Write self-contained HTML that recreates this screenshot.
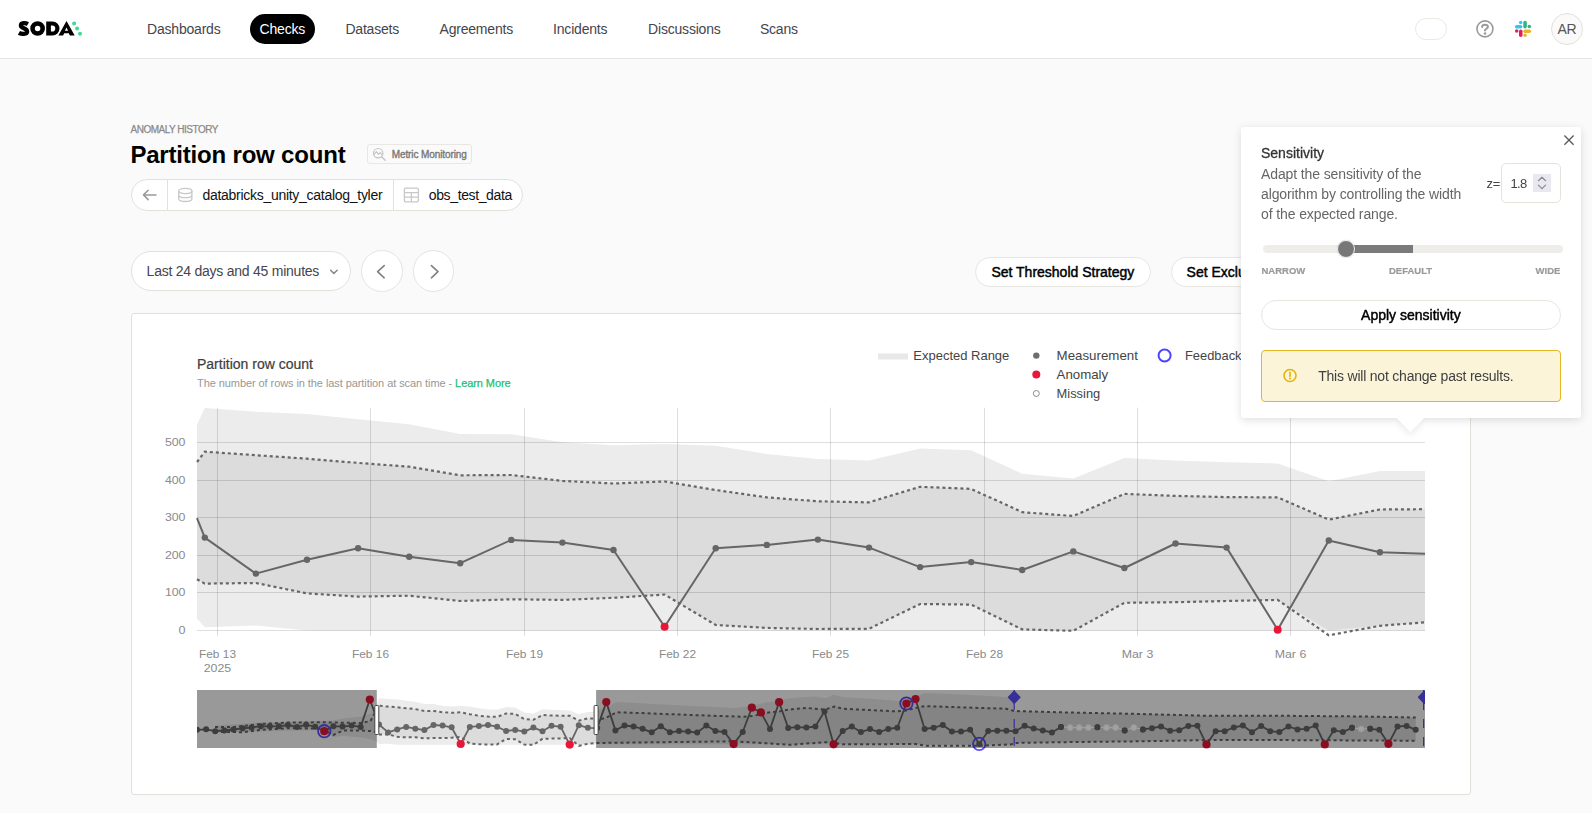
<!DOCTYPE html>
<html lang="en">
<head>
<meta charset="utf-8">
<title>Partition row count - Anomaly history</title>
<style>
*{box-sizing:border-box;margin:0;padding:0}
html,body{width:1592px;height:813px;overflow:hidden}
body{position:relative;background:#fafafa;font-family:"Liberation Sans",sans-serif;font-size:14px;color:#444}
.abs,.t{position:absolute;white-space:nowrap}
.t{line-height:1}
.fb{-webkit-text-stroke:0.45px currentColor}
header{position:absolute;left:0;top:0;width:1592px;height:59px;background:#fff;border-bottom:1px solid #e6e5e1}
.nav{position:absolute;top:22.4px;font-size:14px;line-height:14px;color:#45454d;letter-spacing:-0.2px;white-space:nowrap}
.navpill{position:absolute;left:250px;top:14px;width:65px;height:30px;border-radius:15px;background:#000}
.pill{position:absolute;background:#fff;border:1px solid #e3e1dc;border-radius:20px}
.circ{position:absolute;width:41.6px;height:41.6px;border-radius:50%;background:#fff;border:1px solid #e6e4df}
.card{position:absolute;left:131px;top:313px;width:1340px;height:482px;background:#fff;border:1px solid #e2e0db;border-radius:3px}
svg.chart{position:absolute;left:0;top:0}
.pop{position:absolute;left:1241px;top:127px;width:340px;height:291px;background:#fff;border-radius:3px;box-shadow:0 2px 9px rgba(0,0,0,.13)}
.poplayer{position:absolute;left:0;top:0;width:1592px;height:813px;will-change:transform;pointer-events:none}
.arrow{position:absolute;left:1390.9px;top:418px;width:40px;height:24px;overflow:hidden}
.arrow i{position:absolute;left:10.4px;top:-9.4px;width:18.8px;height:18.8px;background:#fff;transform:rotate(45deg);box-shadow:3px 3px 7px rgba(0,0,0,.07)}
</style>
</head>
<body>

<header>
  <!-- logo -->
  <svg class="abs" style="left:0;top:0" width="100" height="58" viewBox="0 0 100 58">
    <path d="M27.9 24.1C25.6 22.8 20.9 22.5 20.9 25.6C20.9 28.7 27.1 28 27.1 31.5C27.1 34.6 21.4 34.2 18.9 32.8" fill="none" stroke="#000" stroke-width="4.3"/>
    <circle cx="37.6" cy="28.5" r="5.05" fill="none" stroke="#000" stroke-width="4.6"/>
    <path fill-rule="evenodd" d="M46.2 21.4H52.4A7.1 7.1 0 0 1 52.4 35.6H46.2ZM50.9 25.4V31.6H52.2A3.1 3.1 0 0 0 52.2 25.4Z" fill="#000"/>
    <path fill-rule="evenodd" d="M58.4 35.6L66.5 20.9L74.7 35.6H69.9L68.8 33.3H64.2L63.1 35.6ZM66.5 27.6L64.9 30.8H68.1Z" fill="#000"/>
    <circle cx="74.1" cy="23.5" r="2" fill="#3ddc91"/>
    <circle cx="77.1" cy="28.6" r="2" fill="#3ddc91"/>
    <circle cx="80" cy="33.7" r="2" fill="#3ddc91"/>
  </svg>
  <div class="nav" style="left:147px">Dashboards</div>
  <div class="navpill"></div>
  <div class="nav" style="left:259.6px;color:#fff">Checks</div>
  <div class="nav" style="left:345.4px">Datasets</div>
  <div class="nav" style="left:439.5px">Agreements</div>
  <div class="nav" style="left:553.1px">Incidents</div>
  <div class="nav" style="left:648.1px">Discussions</div>
  <div class="nav" style="left:759.9px">Scans</div>

  <div class="abs" style="left:1415px;top:18px;width:32px;height:22px;border:1px solid #ebe9e4;border-radius:11px;background:#fff"></div>
  <!-- help -->
  <svg class="abs" style="left:1474px;top:18px" width="22" height="22" viewBox="0 0 22 22">
    <circle cx="10.95" cy="10.85" r="8" fill="none" stroke="#999" stroke-width="1.6"/>
    <path d="M8.1 8.9C8.2 7.4 9.5 6.8 11 6.8C12.7 6.8 13.9 7.7 13.9 9C13.9 10.7 11 10.8 11 12.6" fill="none" stroke="#999" stroke-width="2" stroke-linecap="round"/>
    <circle cx="11" cy="15.4" r="1.25" fill="#999"/>
  </svg>
  <!-- slack -->
  <svg class="abs" style="left:1513px;top:19px" width="20" height="20" viewBox="1513 19 20 20">
    <rect x="1514.9" y="24.9" width="7.5" height="3.5" rx="1.75" fill="#36c5f0"/><circle cx="1520.7" cy="22.5" r="1.75" fill="#36c5f0"/>
    <rect x="1523.3" y="20.8" width="3.5" height="7.6" rx="1.75" fill="#2eb67d"/><circle cx="1529.3" cy="26.6" r="1.75" fill="#2eb67d"/>
    <rect x="1523.3" y="29.4" width="7.8" height="3.5" rx="1.75" fill="#ecb22e"/><circle cx="1525.1" cy="35.3" r="1.75" fill="#ecb22e"/>
    <rect x="1519" y="29.4" width="3.5" height="7.7" rx="1.75" fill="#e01e5a"/><circle cx="1516.7" cy="31.1" r="1.75" fill="#e01e5a"/>
  </svg>
  <div class="abs" style="left:1551px;top:13px;width:32px;height:32px;border-radius:50%;background:#fafafa;border:1px solid #e3e1dc"></div>
  <div class="t" style="left:1557.6px;top:22px;font-size:14px;line-height:14px;color:#555;letter-spacing:-0.4px">AR</div>
</header>

<!-- title block -->
<div class="t" style="left:130.6px;top:124.9px;font-size:10px;line-height:10px;color:#8a8a8a;letter-spacing:-0.5px;-webkit-text-stroke:0.25px #8a8a8a">ANOMALY HISTORY</div>
<h1 class="t" style="left:130.4px;top:142.5px;font-size:24px;line-height:24px;font-weight:700;color:#000;letter-spacing:-0.19px">Partition row count</h1>

<div class="abs" style="left:366.9px;top:143.7px;width:104.8px;height:20.4px;border:1px solid #e8e7e3;border-radius:3px;background:#fafafa"></div>
<svg class="abs" style="left:370px;top:145px" width="18" height="18" viewBox="0 0 18 18">
  <circle cx="8.2" cy="8.2" r="4.7" fill="none" stroke="#c4c4c4" stroke-width="1.2"/>
  <path d="M11.7 11.8L15.2 15.3" stroke="#c4c4c4" stroke-width="1.3" stroke-linecap="round" fill="none"/>
  <path d="M3.9 9.6L6.4 6.6L8.6 9.4L10.3 7.6L12.4 9.8" stroke="#c4c4c4" stroke-width="1.1" fill="none" stroke-linejoin="round"/>
</svg>
<div class="t fb" style="left:391.7px;top:150px;font-size:10px;line-height:10px;color:#777;letter-spacing:-0.1px;-webkit-text-stroke-width:0.35px">Metric Monitoring</div>

<!-- breadcrumb -->
<div class="pill" style="left:131px;top:179px;width:391.5px;height:32px;border-radius:16px"></div>
<div class="abs" style="left:167px;top:180px;width:1px;height:30px;background:#e3e1dc"></div>
<div class="abs" style="left:393px;top:180px;width:1px;height:30px;background:#e3e1dc"></div>
<svg class="abs" style="left:140px;top:186px" width="20" height="18" viewBox="0 0 20 18">
  <path d="M16 8.9H3.6M8.2 4.2L3.5 8.9L8.2 13.6" fill="none" stroke="#9a9a9a" stroke-width="1.5" stroke-linecap="round" stroke-linejoin="round"/>
</svg>
<svg class="abs" style="left:176px;top:186px" width="18" height="18" viewBox="0 0 18 18">
  <ellipse cx="9.3" cy="5" rx="6.6" ry="2.6" fill="none" stroke="#c8c8c8" stroke-width="1.3"/>
  <path d="M2.7 5V12.8C2.7 14.3 5.6 15.5 9.3 15.5C13 15.5 15.9 14.3 15.9 12.8V5M2.7 8.9C2.7 10.4 5.6 11.6 9.3 11.6C13 11.6 15.9 10.4 15.9 8.9" fill="none" stroke="#c8c8c8" stroke-width="1.3"/>
</svg>
<div class="t" style="left:202.4px;top:188.4px;font-size:14px;line-height:14px;color:#111;letter-spacing:-0.28px">databricks_unity_catalog_tyler</div>
<svg class="abs" style="left:402px;top:186px" width="18" height="18" viewBox="0 0 18 18">
  <rect x="2.4" y="2.2" width="14" height="13.6" rx="1.3" fill="none" stroke="#c8c8c8" stroke-width="1.3"/>
  <path d="M2.4 6.6H16.4M2.4 11.2H16.4M9.4 6.6V15.8" fill="none" stroke="#c8c8c8" stroke-width="1.3"/>
</svg>
<div class="t" style="left:428.8px;top:188.4px;font-size:14px;line-height:14px;color:#111;letter-spacing:-0.38px">obs_test_data</div>

<!-- time range -->
<div class="pill" style="left:131px;top:251px;width:220px;height:40px;border-radius:20px"></div>
<div class="t" style="left:146.6px;top:264.4px;font-size:14px;line-height:14px;color:#45454d;letter-spacing:-0.24px">Last 24 days and 45 minutes</div>
<svg class="abs" style="left:328px;top:266px" width="12" height="12" viewBox="0 0 12 12"><path d="M2.6 4.3L5.9 7.4L9.2 4.3" fill="none" stroke="#888" stroke-width="1.5" stroke-linecap="round" stroke-linejoin="round"/></svg>
<div class="circ" style="left:361.2px;top:250.3px"></div>
<div class="circ" style="left:412.9px;top:250.3px"></div>
<svg class="abs" style="left:372px;top:262px" width="20" height="20" viewBox="0 0 20 20"><path d="M12.2 3.6L5.6 9.7L12.2 15.8" fill="none" stroke="#808080" stroke-width="1.6" stroke-linecap="round" stroke-linejoin="round"/></svg>
<svg class="abs" style="left:424px;top:262px" width="20" height="20" viewBox="0 0 20 20"><path d="M7.4 3.6L14 9.7L7.4 15.8" fill="none" stroke="#808080" stroke-width="1.6" stroke-linecap="round" stroke-linejoin="round"/></svg>

<!-- action buttons -->
<div class="pill" style="left:975px;top:257px;width:176px;height:30px;border-radius:15px;border-color:#e8e6e1"></div>
<div class="t fb" style="left:991.4px;top:264.7px;font-size:14px;line-height:14px;color:#000">Set Threshold Strategy</div>
<div class="pill" style="left:1171px;top:257px;width:190px;height:30px;border-radius:15px;border-color:#e8e6e1"></div>
<div class="t fb" style="left:1186.6px;top:264.7px;font-size:14px;line-height:14px;color:#000">Set Exclusion Values</div>

<!-- chart card -->
<div class="card"></div>
<div class="t" style="left:197px;top:356.9px;font-size:14px;line-height:14px;color:#3d3d3d;-webkit-text-stroke:0.2px #3d3d3d">Partition row count</div>
<div class="t" style="left:197px;top:377.6px;font-size:11px;line-height:11px;color:#979797;letter-spacing:-0.075px">The number of rows in the last partition at scan time - <span style="color:#1dbf73;-webkit-text-stroke:0.25px #1dbf73">Learn More</span></div>

<svg class="chart" width="1592" height="813" viewBox="0 0 1592 813">
<polygon fill="#ececec" points="197.0,424.6 204.8,408.0 255.9,411.8 307.0,413.9 358.1,419.2 409.2,424.2 460.2,434.0 511.3,434.2 562.4,442.2 613.5,445.2 664.6,444.0 715.7,445.8 766.8,454.0 817.9,459.0 869.0,460.5 920.1,448.4 971.2,450.2 1022.2,473.8 1073.3,478.5 1124.4,457.9 1175.5,460.5 1226.6,462.3 1277.7,463.5 1328.8,481.2 1379.9,471.1 1425.0,471.1 1425.0,630.5 1379.9,630.5 1328.8,630.5 1277.7,630.5 1226.6,630.5 1175.5,630.5 1124.4,630.5 1073.3,630.5 1022.2,630.5 971.2,630.5 920.1,630.5 869.0,630.5 817.9,630.5 766.8,630.5 715.7,630.5 664.6,630.5 613.5,630.5 562.4,630.5 511.3,630.5 460.2,630.5 409.2,630.5 358.1,630.5 307.0,630.5 255.9,625.5 204.8,627.3 197.0,618.5"/>
<polygon fill="#dcdcdc" points="197.0,462.0 204.8,451.7 255.9,455.2 307.0,458.7 358.1,462.9 409.2,466.7 460.2,475.3 511.3,475.0 562.4,480.9 613.5,483.5 664.6,481.5 715.7,490.0 766.8,497.4 817.9,501.3 869.0,502.4 920.1,486.8 971.2,488.9 1022.2,512.2 1073.3,516.0 1124.4,493.9 1175.5,495.9 1226.6,497.1 1277.7,497.4 1328.8,519.6 1379.9,509.5 1425.0,509.2 1425.0,622.3 1379.9,625.8 1328.8,630.5 1277.7,599.9 1226.6,601.0 1175.5,602.2 1124.4,602.8 1073.3,630.5 1022.2,629.4 971.2,604.6 920.1,604.0 869.0,628.8 817.9,629.0 766.8,627.9 715.7,625.0 664.6,594.5 613.5,597.8 562.4,599.9 511.3,599.3 460.2,601.0 409.2,595.7 358.1,596.6 307.0,593.4 255.9,583.0 204.8,583.6 197.0,579.2"/>
<path d="M197 442.5H1425M197 480.5H1425M197 517.5H1425M197 555.5H1425M197 592.5H1425M197 630.5H1425M217.5 407.7V636M370.5 407.7V636M524.5 407.7V636M677.5 407.7V636M830.5 407.7V636M984.5 407.7V636M1137.5 407.7V636M1290.5 407.7V636" stroke="#000" stroke-opacity="0.13" stroke-width="1" fill="none"/>
<polyline points="197.0,462.0 204.8,451.7 255.9,455.2 307.0,458.7 358.1,462.9 409.2,466.7 460.2,475.3 511.3,475.0 562.4,480.9 613.5,483.5 664.6,481.5 715.7,490.0 766.8,497.4 817.9,501.3 869.0,502.4 920.1,486.8 971.2,488.9 1022.2,512.2 1073.3,516.0 1124.4,493.9 1175.5,495.9 1226.6,497.1 1277.7,497.4 1328.8,519.6 1379.9,509.5 1425.0,509.2" fill="none" stroke="#666" stroke-width="2.2" stroke-dasharray="3 3"/>
<polyline points="197.0,579.2 204.8,583.6 255.9,583.0 307.0,593.4 358.1,596.6 409.2,595.7 460.2,601.0 511.3,599.3 562.4,599.9 613.5,597.8 664.6,594.5 715.7,625.0 766.8,627.9 817.9,629.0 869.0,628.8 920.1,604.0 971.2,604.6 1022.2,629.4 1073.3,630.8 1124.4,602.8 1175.5,602.2 1226.6,601.0 1277.7,599.9 1328.8,635.3 1379.9,625.8 1425.0,622.3" fill="none" stroke="#666" stroke-width="2.2" stroke-dasharray="3 3"/>
<polyline points="197.0,518.1 204.8,537.6 255.9,573.6 307.0,559.7 358.1,548.2 409.2,556.8 460.2,563.2 511.3,539.9 562.4,542.6 613.5,550.0 664.6,626.7 715.7,548.2 766.8,544.9 817.9,539.6 869.0,547.6 920.1,567.1 971.2,562.1 1022.2,570.0 1073.3,551.4 1124.4,568.0 1175.5,543.5 1226.6,547.6 1277.7,629.7 1328.8,540.5 1379.9,552.3 1425.0,553.8" fill="none" stroke="#666" stroke-width="2" stroke-linejoin="round"/>
<circle cx="204.8" cy="537.6" r="3.2" fill="#666"/>
<circle cx="255.9" cy="573.6" r="3.2" fill="#666"/>
<circle cx="307.0" cy="559.7" r="3.2" fill="#666"/>
<circle cx="358.1" cy="548.2" r="3.2" fill="#666"/>
<circle cx="409.2" cy="556.8" r="3.2" fill="#666"/>
<circle cx="460.2" cy="563.2" r="3.2" fill="#666"/>
<circle cx="511.3" cy="539.9" r="3.2" fill="#666"/>
<circle cx="562.4" cy="542.6" r="3.2" fill="#666"/>
<circle cx="613.5" cy="550.0" r="3.2" fill="#666"/>
<circle cx="664.6" cy="626.7" r="4" fill="#e8173a"/>
<circle cx="715.7" cy="548.2" r="3.2" fill="#666"/>
<circle cx="766.8" cy="544.9" r="3.2" fill="#666"/>
<circle cx="817.9" cy="539.6" r="3.2" fill="#666"/>
<circle cx="869.0" cy="547.6" r="3.2" fill="#666"/>
<circle cx="920.1" cy="567.1" r="3.2" fill="#666"/>
<circle cx="971.2" cy="562.1" r="3.2" fill="#666"/>
<circle cx="1022.2" cy="570.0" r="3.2" fill="#666"/>
<circle cx="1073.3" cy="551.4" r="3.2" fill="#666"/>
<circle cx="1124.4" cy="568.0" r="3.2" fill="#666"/>
<circle cx="1175.5" cy="543.5" r="3.2" fill="#666"/>
<circle cx="1226.6" cy="547.6" r="3.2" fill="#666"/>
<circle cx="1277.7" cy="629.7" r="4" fill="#e8173a"/>
<circle cx="1328.8" cy="540.5" r="3.2" fill="#666"/>
<circle cx="1379.9" cy="552.3" r="3.2" fill="#666"/>
<g font-family="Liberation Sans, sans-serif" font-size="11" fill="#8a8a8a">
<text x="185.5" y="446.4" text-anchor="end" textLength="20.6" lengthAdjust="spacingAndGlyphs">500</text>
<text x="185.5" y="484.09999999999997" text-anchor="end" textLength="20.6" lengthAdjust="spacingAndGlyphs">400</text>
<text x="185.5" y="521.4" text-anchor="end" textLength="20.6" lengthAdjust="spacingAndGlyphs">300</text>
<text x="185.5" y="559.1" text-anchor="end" textLength="20.6" lengthAdjust="spacingAndGlyphs">200</text>
<text x="185.5" y="596.4" text-anchor="end" textLength="20.6" lengthAdjust="spacingAndGlyphs">100</text>
<text x="185.5" y="634.1" text-anchor="end" textLength="7" lengthAdjust="spacingAndGlyphs">0</text>
<text x="217.5" y="658.0" text-anchor="middle" textLength="37" lengthAdjust="spacingAndGlyphs">Feb 13</text>
<text x="370.5" y="658.0" text-anchor="middle" textLength="37" lengthAdjust="spacingAndGlyphs">Feb 16</text>
<text x="524.5" y="658.0" text-anchor="middle" textLength="37" lengthAdjust="spacingAndGlyphs">Feb 19</text>
<text x="677.5" y="658.0" text-anchor="middle" textLength="37" lengthAdjust="spacingAndGlyphs">Feb 22</text>
<text x="830.5" y="658.0" text-anchor="middle" textLength="37" lengthAdjust="spacingAndGlyphs">Feb 25</text>
<text x="984.5" y="658.0" text-anchor="middle" textLength="37" lengthAdjust="spacingAndGlyphs">Feb 28</text>
<text x="1137.5" y="658.0" text-anchor="middle" textLength="31.5" lengthAdjust="spacingAndGlyphs">Mar 3</text>
<text x="1290.5" y="658.0" text-anchor="middle" textLength="31.5" lengthAdjust="spacingAndGlyphs">Mar 6</text>
<text x="217.5" y="672.0" text-anchor="middle" textLength="27.5" lengthAdjust="spacingAndGlyphs">2025</text>
</g>
<rect x="878" y="353.5" width="30" height="6" fill="#e8e8e8"/>
<g font-family="Liberation Sans, sans-serif" font-size="13" fill="#444">
<text x="913.3" y="360.2" textLength="96" lengthAdjust="spacingAndGlyphs">Expected Range</text>
<text x="1056.6" y="360.2" textLength="81.3" lengthAdjust="spacingAndGlyphs">Measurement</text>
<text x="1056.6" y="378.9" textLength="51.6" lengthAdjust="spacingAndGlyphs">Anomaly</text>
<text x="1056.6" y="397.7" textLength="43.6" lengthAdjust="spacingAndGlyphs">Missing</text>
<text x="1185" y="360.2" textLength="56.5" lengthAdjust="spacingAndGlyphs">Feedback</text>
</g>
<circle cx="1036.3" cy="355.6" r="3.2" fill="#6e6e6e"/>
<circle cx="1036.3" cy="374.6" r="4" fill="#e8173a"/>
<circle cx="1036.3" cy="393.5" r="3" fill="#fff" stroke="#8c8c8c" stroke-width="1"/>
<circle cx="1164.6" cy="355.5" r="6" fill="none" stroke="#4f43ff" stroke-width="2"/>
<clipPath id="mc"><rect x="197" y="690" width="1228" height="58"/></clipPath>
<clipPath id="mx"><rect x="197" y="680" width="1228" height="80"/></clipPath>
<g clip-path="url(#mx)">
<polygon fill="#ececec" points="215.0,725.6 261.2,722.4 321.9,720.8 333.0,720.6 343.0,718.5 361.5,716.5 372.0,713.0 377.6,701.9 379.0,698.3 388.1,699.1 397.2,699.6 406.2,700.7 415.3,701.8 424.4,704.0 433.5,704.0 442.6,705.8 451.6,706.4 460.7,706.1 469.8,706.5 478.9,708.3 488.0,709.4 497.1,709.7 506.1,707.1 515.2,707.5 524.3,712.6 533.4,713.7 542.5,709.2 551.5,709.7 560.6,710.1 569.7,710.4 578.8,714.3 587.9,712.1 595.9,712.1 597.4,710.0 606.5,707.9 616.4,702.1 677.9,705.2 734.2,707.9 751.8,705.8 765.9,702.6 779.2,700.8 788.7,698.2 815.0,696.4 825.7,698.2 833.6,694.7 843.2,697.3 870.0,698.7 897.5,700.8 906.6,700.0 924.9,692.9 965.5,694.7 1006.0,697.0 1014.2,698.2 1014.2,744.2 597.4,744.2 595.9,744.8 587.9,744.8 578.8,744.8 569.7,744.8 560.6,744.8 551.5,744.8 542.5,744.8 533.4,744.8 524.3,744.8 515.2,744.8 506.1,744.8 497.1,744.8 488.0,744.8 478.9,744.8 469.8,744.8 460.7,744.8 451.6,744.8 442.6,744.8 433.5,744.8 424.4,744.8 415.3,744.8 406.2,744.8 397.2,744.8 388.1,743.7 379.0,744.1 377.6,742.2 372.0,739.5 361.5,737.5 343.0,736.0 333.0,737.0 321.9,730.0 261.2,731.5 215.0,733.0"/>
<polygon fill="#dcdcdc" points="215.0,726.9 233.5,727.0 261.2,723.9 287.6,722.6 321.9,722.3 361.5,723.0 370.5,721.0 377.6,708.1 379.0,705.8 388.1,706.6 397.2,707.3 406.2,708.3 415.3,709.1 424.4,711.0 433.5,710.9 442.6,712.2 451.6,712.8 460.7,712.3 469.8,714.2 478.9,715.8 488.0,716.6 497.1,716.9 506.1,713.5 515.2,713.9 524.3,719.0 533.4,719.8 542.5,715.0 551.5,715.5 560.6,715.7 569.7,715.8 578.8,720.6 587.9,718.4 595.9,718.4 597.4,720.2 606.5,717.5 616.4,712.3 642.8,713.1 677.9,714.5 713.1,715.8 743.0,716.7 753.6,715.8 765.9,712.8 779.2,711.4 788.7,709.6 806.3,707.9 825.0,709.6 834.5,706.5 843.2,708.7 860.0,709.6 897.5,711.4 906.6,710.5 915.8,707.9 924.9,706.1 965.5,707.5 1006.0,708.7 1014.2,711.0 1061.2,712.3 1140.0,714.0 1208.0,715.8 1286.0,715.8 1364.0,716.5 1415.7,717.5 1415.7,740.7 1286.0,740.1 1208.0,740.1 1140.0,741.3 1061.2,742.2 1014.2,743.0 1011.0,744.4 979.2,744.8 924.9,744.8 915.8,743.9 870.0,744.3 843.2,744.3 834.5,743.0 825.7,742.2 789.0,744.8 762.0,743.0 733.9,741.3 661.0,742.2 597.4,743.0 595.9,743.0 587.9,743.8 578.8,744.8 569.7,738.1 560.6,738.4 551.5,738.6 542.5,738.8 533.4,744.8 524.3,744.6 515.2,739.2 506.1,739.0 497.1,744.4 488.0,744.5 478.9,744.2 469.8,743.6 460.7,737.0 451.6,737.7 442.6,738.1 433.5,738.0 424.4,738.4 415.3,737.2 406.2,737.4 397.2,736.7 388.1,734.4 379.0,734.6 377.6,733.6 373.4,731.2 361.5,730.5 343.0,730.5 333.1,735.1 321.9,728.5 287.6,728.3 261.2,729.9 242.8,732.2 215.0,731.8"/>
<polyline points="215.0,726.9 233.5,727.0 261.2,723.9 287.6,722.6 321.9,722.3 361.5,723.0 370.5,721.0 377.6,708.1 379.0,705.8 388.1,706.6 397.2,707.3 406.2,708.3 415.3,709.1 424.4,711.0 433.5,710.9 442.6,712.2 451.6,712.8 460.7,712.3 469.8,714.2 478.9,715.8 488.0,716.6 497.1,716.9 506.1,713.5 515.2,713.9 524.3,719.0 533.4,719.8 542.5,715.0 551.5,715.5 560.6,715.7 569.7,715.8 578.8,720.6 587.9,718.4 595.9,718.4 597.4,720.2 606.5,717.5 616.4,712.3 642.8,713.1 677.9,714.5 713.1,715.8 743.0,716.7 753.6,715.8 765.9,712.8 779.2,711.4 788.7,709.6 806.3,707.9 825.0,709.6 834.5,706.5 843.2,708.7 860.0,709.6 897.5,711.4 906.6,710.5 915.8,707.9 924.9,706.1 965.5,707.5 1006.0,708.7 1014.2,711.0 1061.2,712.3 1140.0,714.0 1208.0,715.8 1286.0,715.8 1364.0,716.5 1415.7,717.5" fill="none" stroke="#666" stroke-width="2" stroke-dasharray="3 3"/>
<polyline points="215.0,731.8 242.8,732.2 261.2,729.9 287.6,728.3 321.9,728.5 333.1,735.1 343.0,730.5 361.5,730.5 373.4,731.2 377.6,733.6 379.0,734.6 388.1,734.4 397.2,736.7 406.2,737.4 415.3,737.2 424.4,738.4 433.5,738.0 442.6,738.1 451.6,737.7 460.7,737.0 469.8,743.6 478.9,744.2 488.0,744.5 497.1,744.4 506.1,739.0 515.2,739.2 524.3,744.6 533.4,744.9 542.5,738.8 551.5,738.6 560.6,738.4 569.7,738.1 578.8,745.8 587.9,743.8 595.9,743.0 597.4,743.0 661.0,742.2 733.9,741.3 762.0,743.0 789.0,744.8 825.7,742.2 834.5,743.0 843.2,744.3 870.0,744.3 915.8,743.9 924.9,745.7 979.2,745.7 1011.0,744.4 1014.2,743.0 1061.2,742.2 1140.0,741.3 1208.0,740.1 1286.0,740.1 1415.7,740.7" fill="none" stroke="#666" stroke-width="2" stroke-dasharray="3 3"/>
<polyline points="197.0,729.8 197.0,729.8 206.1,729.3 215.2,731.2 224.3,730.5 233.4,729.5 242.5,728.3 251.6,727.5 260.7,726.2 269.8,726.3 278.9,726.3 287.9,725.0 297.0,726.9 306.1,724.8 315.2,726.7 324.3,731.2 333.4,726.2 342.5,726.6 351.6,725.6 360.7,726.9 369.8,699.5 379.0,724.5 388.1,732.4 397.2,729.4 406.2,726.9 415.3,728.7 424.4,730.1 433.5,725.0 442.6,725.6 451.6,727.3 460.7,744.0 469.8,726.9 478.9,726.1 488.0,725.0 497.1,726.7 506.1,731.0 515.2,729.9 524.3,731.6 533.4,727.6 542.5,731.2 551.5,725.8 560.6,726.7 569.7,744.6 578.8,725.2 587.9,727.8 597.2,728.1 606.3,702.1 615.4,730.4 624.5,725.5 633.6,726.5 642.6,728.8 651.7,732.3 660.8,726.2 669.9,732.3 679.0,731.1 688.1,731.6 697.2,732.5 706.3,725.6 715.4,731.1 724.5,732.0 733.6,744.1 742.7,732.0 751.8,707.7 760.9,712.4 770.0,729.1 779.1,702.2 788.2,727.9 797.3,727.2 806.4,727.6 815.4,726.5 824.5,711.4 833.6,744.3 842.7,731.1 851.8,726.5 860.9,732.1 870.0,729.0 879.1,732.1 888.2,729.0 897.3,727.7 906.4,703.5 915.5,699.1 924.6,729.0 933.7,727.7 942.8,725.1 951.9,731.6 961.0,731.6 970.1,729.8 979.2,743.9 988.2,731.1 997.3,730.7 1006.4,730.7 1015.5,731.3 1024.6,725.8 1033.7,728.6 1042.8,730.4 1051.9,732.5 1061.0,726.9" fill="none" stroke="#666" stroke-width="1.8" stroke-linejoin="round"/>
<polyline points="1142.9,729.4 1152.0,728.2 1161.0,726.5 1170.1,730.8 1179.2,730.2 1188.3,725.9 1197.4,725.7 1206.5,744.4 1215.6,731.2 1224.7,731.2 1233.8,727.5 1242.9,725.5 1252.0,732.3 1261.1,725.9 1270.2,731.2 1279.3,732.1 1288.4,726.5 1297.5,729.4 1306.6,728.8 1315.7,725.5 1324.8,744.4 1333.8,730.2 1342.9,732.1 1352.0,727.8" fill="none" stroke="#666" stroke-width="1.8" stroke-linejoin="round"/>
<polyline points="1370.2,728.8 1379.3,729.8 1388.4,743.8 1397.5,726.5 1406.6,725.9 1415.7,729.8" fill="none" stroke="#666" stroke-width="1.8" stroke-linejoin="round"/>
<circle cx="197.0" cy="729.8" r="3" fill="#666"/>
<circle cx="206.1" cy="729.3" r="3" fill="#666"/>
<circle cx="215.2" cy="731.2" r="3" fill="#666"/>
<circle cx="224.3" cy="730.5" r="3" fill="#666"/>
<circle cx="233.4" cy="729.5" r="3" fill="#666"/>
<circle cx="242.5" cy="728.3" r="3" fill="#666"/>
<circle cx="251.6" cy="727.5" r="3" fill="#666"/>
<circle cx="260.7" cy="726.2" r="3" fill="#666"/>
<circle cx="269.8" cy="726.3" r="3" fill="#666"/>
<circle cx="278.9" cy="726.3" r="3" fill="#666"/>
<circle cx="287.9" cy="725.0" r="3" fill="#666"/>
<circle cx="297.0" cy="726.9" r="3" fill="#666"/>
<circle cx="306.1" cy="724.8" r="3" fill="#666"/>
<circle cx="315.2" cy="726.7" r="3" fill="#666"/>
<circle cx="333.4" cy="726.2" r="3" fill="#666"/>
<circle cx="342.5" cy="726.6" r="3" fill="#666"/>
<circle cx="351.6" cy="725.6" r="3" fill="#666"/>
<circle cx="360.7" cy="726.9" r="3" fill="#666"/>
<circle cx="379.0" cy="724.5" r="3" fill="#666"/>
<circle cx="388.1" cy="732.4" r="3" fill="#666"/>
<circle cx="397.2" cy="729.4" r="3" fill="#666"/>
<circle cx="406.2" cy="726.9" r="3" fill="#666"/>
<circle cx="415.3" cy="728.7" r="3" fill="#666"/>
<circle cx="424.4" cy="730.1" r="3" fill="#666"/>
<circle cx="433.5" cy="725.0" r="3" fill="#666"/>
<circle cx="442.6" cy="725.6" r="3" fill="#666"/>
<circle cx="451.6" cy="727.3" r="3" fill="#666"/>
<circle cx="469.8" cy="726.9" r="3" fill="#666"/>
<circle cx="478.9" cy="726.1" r="3" fill="#666"/>
<circle cx="488.0" cy="725.0" r="3" fill="#666"/>
<circle cx="497.1" cy="726.7" r="3" fill="#666"/>
<circle cx="506.1" cy="731.0" r="3" fill="#666"/>
<circle cx="515.2" cy="729.9" r="3" fill="#666"/>
<circle cx="524.3" cy="731.6" r="3" fill="#666"/>
<circle cx="533.4" cy="727.6" r="3" fill="#666"/>
<circle cx="542.5" cy="731.2" r="3" fill="#666"/>
<circle cx="551.5" cy="725.8" r="3" fill="#666"/>
<circle cx="560.6" cy="726.7" r="3" fill="#666"/>
<circle cx="578.8" cy="725.2" r="3" fill="#666"/>
<circle cx="587.9" cy="727.8" r="3" fill="#666"/>
<circle cx="597.2" cy="728.1" r="3" fill="#666"/>
<circle cx="615.4" cy="730.4" r="3" fill="#666"/>
<circle cx="624.5" cy="725.5" r="3" fill="#666"/>
<circle cx="633.6" cy="726.5" r="3" fill="#666"/>
<circle cx="642.6" cy="728.8" r="3" fill="#666"/>
<circle cx="651.7" cy="732.3" r="3" fill="#666"/>
<circle cx="660.8" cy="726.2" r="3" fill="#666"/>
<circle cx="669.9" cy="732.3" r="3" fill="#666"/>
<circle cx="679.0" cy="731.1" r="3" fill="#666"/>
<circle cx="688.1" cy="731.6" r="3" fill="#666"/>
<circle cx="697.2" cy="732.5" r="3" fill="#666"/>
<circle cx="706.3" cy="725.6" r="3" fill="#666"/>
<circle cx="715.4" cy="731.1" r="3" fill="#666"/>
<circle cx="724.5" cy="732.0" r="3" fill="#666"/>
<circle cx="742.7" cy="732.0" r="3" fill="#666"/>
<circle cx="770.0" cy="729.1" r="3" fill="#666"/>
<circle cx="788.2" cy="727.9" r="3" fill="#666"/>
<circle cx="797.3" cy="727.2" r="3" fill="#666"/>
<circle cx="806.4" cy="727.6" r="3" fill="#666"/>
<circle cx="815.4" cy="726.5" r="3" fill="#666"/>
<circle cx="824.5" cy="711.4" r="3" fill="#666"/>
<circle cx="842.7" cy="731.1" r="3" fill="#666"/>
<circle cx="851.8" cy="726.5" r="3" fill="#666"/>
<circle cx="860.9" cy="732.1" r="3" fill="#666"/>
<circle cx="870.0" cy="729.0" r="3" fill="#666"/>
<circle cx="879.1" cy="732.1" r="3" fill="#666"/>
<circle cx="888.2" cy="729.0" r="3" fill="#666"/>
<circle cx="897.3" cy="727.7" r="3" fill="#666"/>
<circle cx="924.6" cy="729.0" r="3" fill="#666"/>
<circle cx="933.7" cy="727.7" r="3" fill="#666"/>
<circle cx="942.8" cy="725.1" r="3" fill="#666"/>
<circle cx="951.9" cy="731.6" r="3" fill="#666"/>
<circle cx="961.0" cy="731.6" r="3" fill="#666"/>
<circle cx="970.1" cy="729.8" r="3" fill="#666"/>
<circle cx="979.2" cy="743.9" r="3" fill="#666"/>
<circle cx="988.2" cy="731.1" r="3" fill="#666"/>
<circle cx="997.3" cy="730.7" r="3" fill="#666"/>
<circle cx="1006.4" cy="730.7" r="3" fill="#666"/>
<circle cx="1015.5" cy="731.3" r="3" fill="#666"/>
<circle cx="1024.6" cy="725.8" r="3" fill="#666"/>
<circle cx="1033.7" cy="728.6" r="3" fill="#666"/>
<circle cx="1042.8" cy="730.4" r="3" fill="#666"/>
<circle cx="1051.9" cy="732.5" r="3" fill="#666"/>
<circle cx="1061.0" cy="726.9" r="3" fill="#666"/>
<circle cx="1097.4" cy="727.2" r="3" fill="#666"/>
<circle cx="1124.7" cy="730.4" r="3" fill="#666"/>
<circle cx="1142.9" cy="729.4" r="3" fill="#666"/>
<circle cx="1152.0" cy="728.2" r="3" fill="#666"/>
<circle cx="1161.0" cy="726.5" r="3" fill="#666"/>
<circle cx="1170.1" cy="730.8" r="3" fill="#666"/>
<circle cx="1179.2" cy="730.2" r="3" fill="#666"/>
<circle cx="1188.3" cy="725.9" r="3" fill="#666"/>
<circle cx="1197.4" cy="725.7" r="3" fill="#666"/>
<circle cx="1215.6" cy="731.2" r="3" fill="#666"/>
<circle cx="1224.7" cy="731.2" r="3" fill="#666"/>
<circle cx="1233.8" cy="727.5" r="3" fill="#666"/>
<circle cx="1242.9" cy="725.5" r="3" fill="#666"/>
<circle cx="1252.0" cy="732.3" r="3" fill="#666"/>
<circle cx="1261.1" cy="725.9" r="3" fill="#666"/>
<circle cx="1270.2" cy="731.2" r="3" fill="#666"/>
<circle cx="1279.3" cy="732.1" r="3" fill="#666"/>
<circle cx="1288.4" cy="726.5" r="3" fill="#666"/>
<circle cx="1297.5" cy="729.4" r="3" fill="#666"/>
<circle cx="1306.6" cy="728.8" r="3" fill="#666"/>
<circle cx="1315.7" cy="725.5" r="3" fill="#666"/>
<circle cx="1333.8" cy="730.2" r="3" fill="#666"/>
<circle cx="1342.9" cy="732.1" r="3" fill="#666"/>
<circle cx="1352.0" cy="727.8" r="3" fill="#666"/>
<circle cx="1370.2" cy="728.8" r="3" fill="#666"/>
<circle cx="1379.3" cy="729.8" r="3" fill="#666"/>
<circle cx="1397.5" cy="726.5" r="3" fill="#666"/>
<circle cx="1406.6" cy="725.9" r="3" fill="#666"/>
<circle cx="1415.7" cy="729.8" r="3" fill="#666"/>
<circle cx="324.3" cy="731.2" r="4.1" fill="#e8173a"/>
<circle cx="369.8" cy="699.5" r="4.1" fill="#e8173a"/>
<circle cx="460.7" cy="744.0" r="4.1" fill="#e8173a"/>
<circle cx="569.7" cy="744.6" r="4.1" fill="#e8173a"/>
<circle cx="606.3" cy="702.1" r="4.1" fill="#e8173a"/>
<circle cx="733.6" cy="744.1" r="4.1" fill="#e8173a"/>
<circle cx="751.8" cy="707.7" r="4.1" fill="#e8173a"/>
<circle cx="760.9" cy="712.4" r="4.1" fill="#e8173a"/>
<circle cx="779.1" cy="702.2" r="4.1" fill="#e8173a"/>
<circle cx="833.6" cy="744.3" r="4.1" fill="#e8173a"/>
<circle cx="906.4" cy="703.5" r="4.1" fill="#e8173a"/>
<circle cx="915.5" cy="699.1" r="4.1" fill="#e8173a"/>
<circle cx="1206.5" cy="744.4" r="4.1" fill="#e8173a"/>
<circle cx="1324.8" cy="744.4" r="4.1" fill="#e8173a"/>
<circle cx="1388.4" cy="743.8" r="4.1" fill="#e8173a"/>
<circle cx="324.3" cy="731.2" r="6.2" fill="none" stroke="#5a4dff" stroke-width="1.8"/>
<circle cx="906.4" cy="703.5" r="6.2" fill="none" stroke="#5a4dff" stroke-width="1.8"/>
<circle cx="979.2" cy="743.9" r="6.2" fill="none" stroke="#5a4dff" stroke-width="1.8"/>
<g clip-path="url(#mc)">
<path d="M1014.2 690V748M1423.6 690V748" stroke="#5a4dff" stroke-width="1.2" stroke-dasharray="9 9" stroke-dashoffset="7" fill="none"/>
<path d="M1014.2 690.3l6.6 7-6.6 7-6.6-7zM1424.3 690.3l6.6 7-6.6 7-6.6-7z" fill="#5a4dff"/>
</g>
<rect x="197" y="690" width="179.8" height="58" fill="#000" fill-opacity="0.4"/>
<rect x="596.1" y="690" width="828.9" height="58" fill="#000" fill-opacity="0.4"/>
</g>
<path d="M1070.1 727.6L1061.0 726.9M1070.1 727.6L1079.2 727.6M1079.2 727.6L1070.1 727.6M1079.2 727.6L1088.3 727.6M1088.3 727.6L1079.2 727.6M1088.3 727.6L1097.4 727.2M1106.5 727.6L1097.4 727.2M1106.5 727.6L1115.6 727.6M1115.6 727.6L1106.5 727.6M1115.6 727.6L1124.7 730.4M1133.8 727.5L1124.7 730.4M1133.8 727.5L1142.9 729.4M1361.1 729.0L1352.0 727.8M1361.1 729.0L1370.2 728.8" stroke="#a4a4a4" stroke-width="1" fill="none"/>
<circle cx="1061.0" cy="726.9" r="3" fill="#3d3d3d"/>
<circle cx="1097.4" cy="727.2" r="3" fill="#3d3d3d"/>
<circle cx="1124.7" cy="730.4" r="3" fill="#3d3d3d"/>
<circle cx="1142.9" cy="729.4" r="3" fill="#3d3d3d"/>
<circle cx="1352.0" cy="727.8" r="3" fill="#3d3d3d"/>
<circle cx="1370.2" cy="728.8" r="3" fill="#3d3d3d"/>
<circle cx="1070.1" cy="727.6" r="3" fill="#a2a2a2" stroke="#979797" stroke-width="1"/>
<circle cx="1079.2" cy="727.6" r="3" fill="#a2a2a2" stroke="#979797" stroke-width="1"/>
<circle cx="1088.3" cy="727.6" r="3" fill="#a2a2a2" stroke="#979797" stroke-width="1"/>
<circle cx="1106.5" cy="727.6" r="3" fill="#a2a2a2" stroke="#979797" stroke-width="1"/>
<circle cx="1115.6" cy="727.6" r="3" fill="#a2a2a2" stroke="#979797" stroke-width="1"/>
<circle cx="1133.8" cy="727.5" r="3" fill="#a2a2a2" stroke="#979797" stroke-width="1"/>
<circle cx="1361.1" cy="729.0" r="3" fill="#a2a2a2" stroke="#979797" stroke-width="1"/>
<rect x="374.8" y="705.5" width="4" height="29" rx="1" fill="#fff" stroke="#444" stroke-width="1"/>
<rect x="594.1" y="705.5" width="4" height="29" rx="1" fill="#fff" stroke="#444" stroke-width="1"/>
</svg>

<!-- sensitivity popover -->
<div class="poplayer">
<div class="pop"></div>
<div class="arrow"><i></i></div>
<svg class="abs" style="left:1561px;top:132px" width="16" height="16" viewBox="0 0 16 16"><path d="M3.4 3.5L12.6 12.7M12.6 3.5L3.4 12.7" stroke="#5c5c5c" stroke-width="1.35" fill="none"/></svg>
<div class="t" style="left:1261px;top:146.4px;font-size:14px;line-height:14px;color:#333;-webkit-text-stroke:0.3px #333">Sensitivity</div>
<div class="t" style="left:1261px;top:163.9px;font-size:14px;line-height:20px;color:#666;letter-spacing:-0.11px;white-space:pre">Adapt the sensitivity of the
algorithm by controlling the width
of the expected range.</div>
<div class="t" style="left:1486.6px;top:176.6px;font-size:13px;line-height:13px;color:#444;letter-spacing:-0.4px">z=</div>
<div class="abs" style="left:1501px;top:163px;width:60px;height:40px;border:1px solid #e6e3dd;border-radius:5px;background:#fff"></div>
<div class="t" style="left:1510.6px;top:176.6px;font-size:13px;line-height:13px;color:#444;letter-spacing:-0.7px">1.8</div>
<div class="abs" style="left:1533px;top:174px;width:18px;height:18px;background:#e9e8ee"></div>
<svg class="abs" style="left:1533px;top:174px" width="18" height="18" viewBox="1533 174 18 18"><path d="M1538.4 180.7L1542 177.3L1545.6 180.7M1538.4 185.1L1542 188.6L1545.6 185.1" fill="none" stroke="#888899" stroke-width="1.2" stroke-linecap="round" stroke-linejoin="round"/></svg>

<!-- slider -->
<div class="abs" style="left:1263px;top:245px;width:300px;height:8px;border-radius:4px;background:#eeede9"></div>
<div class="abs" style="left:1346px;top:245px;width:67px;height:8px;background:#7a7a7a"></div>
<div class="abs" style="left:1337px;top:240px;width:18px;height:18px;border-radius:50%;background:#777;border:1.5px solid #f4f4f4;box-shadow:0 0 1px rgba(0,0,0,.25)"></div>
<div class="t" style="left:1261.5px;top:265.7px;font-size:9.5px;line-height:10px;color:#9a9a9a;font-weight:700;-webkit-text-stroke:0.2px #9a9a9a">NARROW</div>
<div class="t" style="left:1389px;top:265.7px;font-size:9.5px;line-height:10px;color:#9a9a9a;font-weight:700;-webkit-text-stroke:0.2px #9a9a9a">DEFAULT</div>
<div class="t" style="left:1535.6px;top:265.7px;font-size:9.5px;line-height:10px;color:#9a9a9a;font-weight:700;-webkit-text-stroke:0.2px #9a9a9a">WIDE</div>

<div class="pill" style="left:1261px;top:300px;width:300px;height:30px;border-radius:15px;border-color:#e8e6e1"></div>
<div class="t fb" style="left:1361.1px;top:308.2px;font-size:14px;line-height:14px;color:#000">Apply sensitivity</div>

<div class="abs" style="left:1261px;top:350px;width:300px;height:52px;border:1px solid #e3b623;border-radius:4px;background:#fbf4d8"></div>
<svg class="abs" style="left:1282px;top:367px" width="16" height="16" viewBox="0 0 16 16">
  <circle cx="8" cy="8.5" r="6" fill="none" stroke="#e3b40f" stroke-width="1.6"/>
  <path d="M8 5.3V9.3" stroke="#e3b40f" stroke-width="1.7" stroke-linecap="round"/><circle cx="8" cy="11.6" r="1" fill="#e3b40f"/>
</svg>
<div class="t" style="left:1318.2px;top:369.3px;font-size:14px;line-height:14px;color:#3f3f3f;letter-spacing:-0.21px">This will not change past results.</div>
</div>

</body>
</html>
